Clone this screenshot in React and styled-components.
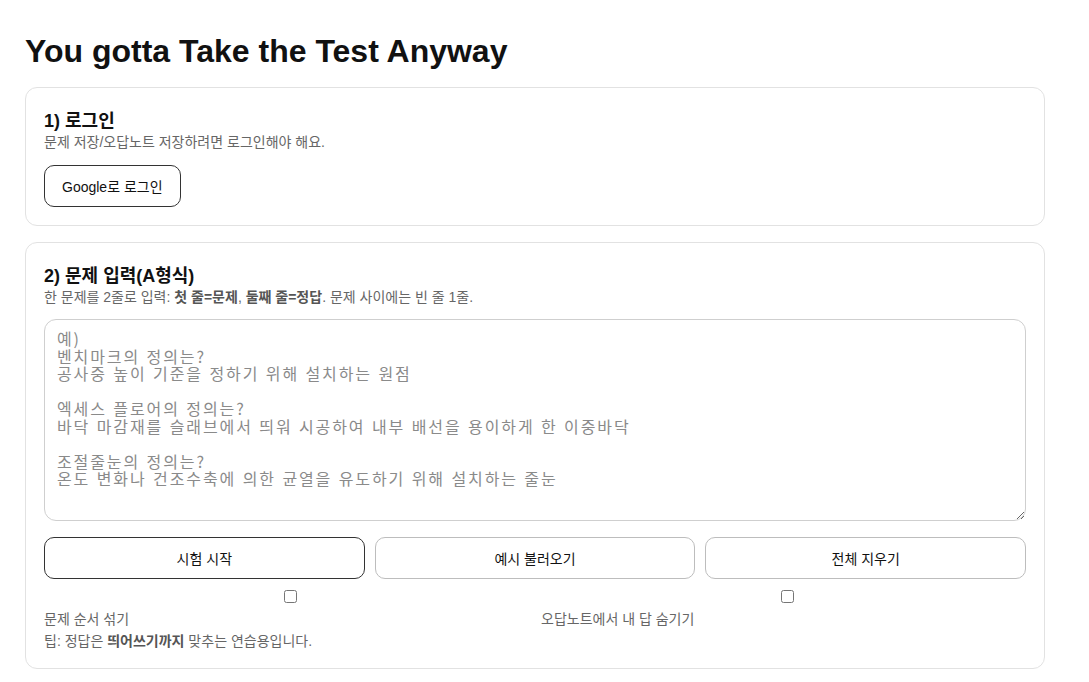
import React from "react"
import styled, { createGlobalStyle } from "styled-components"

const GlobalStyle = createGlobalStyle`
  html, body {
    margin: 0;
    padding: 0;
    background: #fff;
  }
  body {
    font-family: "Liberation Sans", Arial, "Noto Sans CJK KR", sans-serif;
    color: #111;
  }
`

const Page = styled.div`
  max-width: 1020px;
  padding: 32px 25px 24px;
`

const Heading = styled.h1`
  margin: 0 0 17px;
  font-size: 32px;
  line-height: 38px;
  font-weight: 700;
  color: #111;
`

const Card = styled.section`
  border: 1px solid #e2e2e2;
  border-radius: 12px;
  padding: 18px;
  margin-bottom: 16px;
  background: #fff;
`

const CardTitle = styled.h2`
  margin: 4px 0 0;
  font-size: 18px;
  line-height: 22px;
  font-weight: 700;
  color: #111;
`

const CardDesc = styled.p`
  margin: 1px 0 0;
  font-size: 14px;
  line-height: 18px;
  color: #666;

  b {
    font-weight: 700;
    color: #555;
  }
`

const Button = styled.button`
  height: 42px;
  padding: 0 15px;
  background: #fff;
  border: 1px solid ${(p) => (p.$primary ? "#333" : "#bdbdbd")};
  border-radius: 10px;
  font-family: "Liberation Sans", Arial, "Noto Sans CJK KR", sans-serif;
  font-size: 14px;
  color: #111;
  cursor: pointer;
`

const LoginButton = styled(Button)`
  margin-top: 14px;
  padding: 0 17px;
`

const TextArea = styled.textarea`
  display: block;
  box-sizing: border-box;
  width: 100%;
  height: 202px;
  margin-top: 13px;
  padding: 10px 12px;
  border: 1px solid #cfcfcf;
  border-radius: 12px;
  font-family: "Noto Sans CJK KR", monospace;
  font-size: 16px;
  line-height: 17.5px;
  letter-spacing: 1.9px;
  word-spacing: 1px;
  color: #222;
  resize: vertical;

  &::placeholder {
    color: #8a8a8a;
  }
`

const ButtonRow = styled.div`
  display: grid;
  grid-template-columns: repeat(3, 1fr);
  gap: 10px;
  margin-top: 16px;
`

const OptionRow = styled.div`
  display: grid;
  grid-template-columns: 1fr 1fr;
  gap: 12px;
  margin-top: 8px;
`

const Option = styled.label`
  display: flex;
  flex-direction: column;
  gap: 4px;
  font-size: 14px;
  line-height: 18px;
  color: #666;

  input {
    width: calc(100% - 8px);
    height: 13px;
    margin: 3px 0 3px 8px;
  }
`

const Tip = styled.p`
  margin: 4px 0 0;
  font-size: 14px;
  line-height: 18px;
  color: #666;

  b {
    font-weight: 700;
    color: #555;
  }
`

const sample = [
  "예)",
  "벤치마크의 정의는?",
  "공사중 높이 기준을 정하기 위해 설치하는 원점",
  "",
  "엑세스 플로어의 정의는?",
  "바닥 마감재를 슬래브에서 띄워 시공하여 내부 배선을 용이하게 한 이중바닥",
  "",
  "조절줄눈의 정의는?",
  "온도 변화나 건조수축에 의한 균열을 유도하기 위해 설치하는 줄눈",
].join("\n")

const App = () => (
  <>
    <GlobalStyle />
    <Page>
      <Heading>You gotta Take the Test Anyway</Heading>

      <Card>
        <CardTitle>1) 로그인</CardTitle>
        <CardDesc>문제 저장/오답노트 저장하려면 로그인해야 해요.</CardDesc>
        <LoginButton $primary>Google로 로그인</LoginButton>
      </Card>

      <Card>
        <CardTitle>2) 문제 입력(A형식)</CardTitle>
        <CardDesc>
          한 문제를 2줄로 입력: <b>첫 줄=문제</b>, <b>둘째 줄=정답</b>. 문제 사이에는 빈 줄 1줄.
        </CardDesc>
        <TextArea placeholder={sample} />
        <ButtonRow>
          <Button $primary>시험 시작</Button>
          <Button>예시 불러오기</Button>
          <Button>전체 지우기</Button>
        </ButtonRow>
        <OptionRow>
          <Option>
            <input type="checkbox" />
            문제 순서 섞기
          </Option>
          <Option>
            <input type="checkbox" />
            오답노트에서 내 답 숨기기
          </Option>
        </OptionRow>
        <Tip>
          팁: 정답은 <b>띄어쓰기까지</b> 맞추는 연습용입니다.
        </Tip>
      </Card>
    </Page>
  </>
)

export default App
